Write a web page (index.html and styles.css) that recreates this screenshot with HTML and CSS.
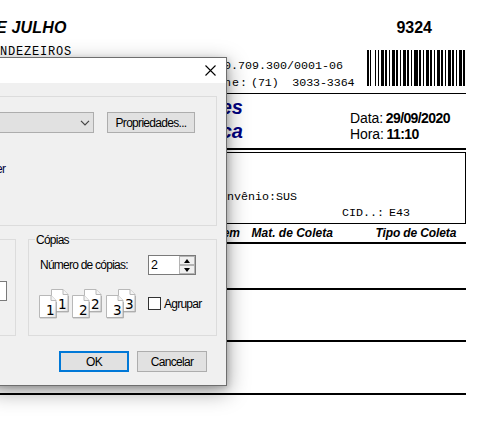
FILE: index.html
```
<!DOCTYPE html>
<html lang="pt-BR">
<head>
<meta charset="utf-8">
<title>Imprimir</title>
<link rel="stylesheet" href="styles.css">
</head>
<body>
<main class="sheet">
  <header class="letterhead">
    <div class="title-row"><span class="unit">E JULHO</span><span class="number">9324</span></div>
    <div class="street">NDEZEIROS</div>
    <div class="contact">
      <div class="contact-lines">
        <div class="cnpj">0.709.300/0001-06</div>
        <div class="phone"><span class="phone-label">ne:</span><span class="phone-number">(71)&nbsp; 3033-3364</span></div>
      </div>
      <svg class="barcode" width="98" height="36" viewBox="0 0 98 36" shape-rendering="crispEdges"><path d="M0 0h2v36h-2zM3 0h1v36h-1zM8 0h1v36h-1zM11 0h1v36h-1zM14 0h3v36h-3zM18 0h2v36h-2zM22 0h1v36h-1zM25 0h3v36h-3zM29 0h2v36h-2zM33 0h1v36h-1zM36 0h3v36h-3zM40 0h2v36h-2zM44 0h1v36h-1zM47 0h4v36h-4zM52 0h2v36h-2zM56 0h1v36h-1zM59 0h3v36h-3zM63 0h2v36h-2zM67 0h1v36h-1zM70 0h3v36h-3zM74 0h2v36h-2zM78 0h1v36h-1zM81 0h3v36h-3zM85 0h2v36h-2zM89 0h1v36h-1zM92 0h3v36h-3zM96 0h2v36h-2z"/></svg>
    </div>
  </header>
  <section class="heading">
    <div class="heading-title"><div>es</div><div>ca</div></div>
    <div class="stamp">
      <div>Data: <b>29/09/2020</b></div>
      <div>Hora: <b>11:10</b></div>
    </div>
  </section>
  <section class="patient">
    <div class="insurance">Convênio:SUS</div>
    <div class="cid"><span>CID..:</span><span>E43</span></div>
  </section>
  <div class="columns"><span class="col-order">em</span><span class="col-material">Mat. de Coleta</span><span class="col-type">Tipo de Coleta</span></div>
  <div class="entry"></div>
  <div class="entry"></div>
  <div class="entry"></div>
</main>

<div class="dialog" role="dialog">
  <div class="titlebar">
    <svg width="11" height="11" viewBox="0 0 11 11"><path d="M.5.5l10 10M10.5.5l-10 10" stroke="#000" stroke-width="1.1"/></svg>
  </div>
  <div class="dialog-body">
    <fieldset class="group printer">
      <div class="printer-row">
        <div class="combo"><svg width="10" height="6" viewBox="0 0 10 6"><path d="M1 .8l4 4 4-4" fill="none" stroke="#444" stroke-width="1.2"/></svg></div>
        <button class="btn props"><span>Propriedades...</span></button>
      </div>
      <div class="where">er</div>
    </fieldset>
    <div class="lower">
      <div class="group range"><div class="page-field"></div></div>
      <div class="group copies">
        <div class="legend">Cópias</div>
        <div class="count-row">
          <span class="count-label">Número de cópias:</span>
          <div class="spinner"><span class="value">2</span>
            <div class="arrows">
              <i><svg width="6" height="4" viewBox="0 0 6 4"><path d="M3 0l3 4H0z"/></svg></i>
              <i><svg width="6" height="4" viewBox="0 0 6 4"><path d="M0 0h6L3 4z"/></svg></i>
            </div>
          </div>
        </div>
        <div class="collate-row">
          <svg class="pages" width="100" height="32" viewBox="0 0 100 32">
            <defs>
              <linearGradient id="paper" x1="0" y1="0" x2="1" y2="1"><stop offset="0" stop-color="#fff"/><stop offset=".6" stop-color="#fff"/><stop offset="1" stop-color="#e4e4e4"/></linearGradient>
              <g id="leaf"><path d="M.5.5h11.500l5 5v17H.5z" fill="url(#paper)" stroke="#b8b8b8"/><path d="M12 .5v5h5" fill="#f4f4f4" stroke="#b8b8b8"/><path d="M1 23h16.500V7" fill="none" stroke="#999" stroke-width=".6"/></g>
            </defs>
            <g><use href="#leaf" x="12" y="1"/><use href="#leaf" x="0" y="7"/><text x="19" y="21">1</text><text x="7" y="27">1</text></g>
            <g transform="translate(33)"><use href="#leaf" x="12" y="1"/><use href="#leaf" x="0" y="7"/><text x="19" y="21">2</text><text x="7" y="27">2</text></g>
            <g transform="translate(67)"><use href="#leaf" x="12" y="1"/><use href="#leaf" x="0" y="7"/><text x="19" y="21">3</text><text x="7" y="27">3</text></g>
          </svg>
          <span class="check"></span><span class="check-label">Agrupar</span>
        </div>
      </div>
    </div>
    <div class="actions">
      <button class="btn ok"><span>OK</span></button>
      <button class="btn"><span>Cancelar</span></button>
    </div>
  </div>
</div>
</body>
</html>
```
FILE: styles.css
```
* { box-sizing: border-box; }
body { margin: 0; width: 491px; height: 435px; overflow: hidden; background: #fff; color: #000; font-family: "Liberation Sans", sans-serif; }

.sheet { width: 466px; }
.letterhead { height: 94px; border-bottom: 1px solid #000; font-family: "Liberation Mono", monospace; }
.title-row { display: flex; justify-content: space-between; height: 44px; padding: 18px 34px 0 0; font: bold 16px/20px "Liberation Sans", sans-serif; }
.unit { font-style: italic; margin-left: -4px; letter-spacing: .2px; }
.street { height: 6px; font-size: 12px; line-height: 16px; letter-spacing: .8px; }
.contact { display: flex; justify-content: flex-end; padding-right: 1px; }
.contact-lines { font-size: 11.67px; width: 141px; padding-top: 9px; margin-right: 2px; white-space: nowrap; }
.cnpj { height: 17px; line-height: 14px; }
.phone { display: flex; line-height: 14px; }
.phone-label { width: 27px; letter-spacing: 1px; }
.phone-number { letter-spacing: -.1px; }
.barcode { display: block; }

.heading { display: flex; justify-content: space-between; height: 56px; border-bottom: 2px solid #000; }
.heading-title { width: 243px; padding-top: 1px; text-align: right; font: italic bold 20px/24px "Liberation Sans", sans-serif; color: #000080; }
.stamp { width: 116px; padding-top: 16px; font-size: 14px; line-height: 16px; letter-spacing: -.1px; white-space: nowrap; }
.stamp b { margin-left: -1px; letter-spacing: -.6px; }

.patient { height: 72px; margin-top: 2px; border: 1px solid #000; padding: 36px 0 0 212px; font: 11.67px/16px "Liberation Mono", monospace; }
.cid { display: flex; gap: 5px; padding-left: 129px; }
.columns { display: flex; height: 20px; border-bottom: 2px solid #000; font: italic bold 12px/18px "Liberation Sans", sans-serif; letter-spacing: 0; }
.col-order { width: 240px; text-align: right; }
.col-material { width: 124px; margin-left: 11.500px; }
.col-type { letter-spacing: -.12px; }
.entry { height: 52px; border-bottom: 2px solid #000; }
.columns + .entry { height: 46px; }
.entry:last-child { height: 53px; }

.dialog { position: absolute; left: -10px; top: 57px; width: 237px; height: 329px; border: 1px solid #6e6e6e; background: #f0f0f0; box-shadow: 1px 6px 20px rgba(0,0,0,.38), 1px 2px 6px rgba(0,0,0,.18); font-size: 12px; letter-spacing: -.76px; }
.titlebar { display: flex; justify-content: flex-end; align-items: center; height: 25px; padding-right: 10px; background: #fff; }
.dialog-body { padding: 13px 9px 0 0; }
.group { margin: 0; border: 1px solid #dcdcdc; }
.printer { height: 130px; padding: 15px 0 0; }
.printer-row { display: flex; gap: 13px; }
.combo { display: flex; align-items: center; justify-content: flex-end; width: 102px; height: 21px; padding-right: 3px; border: 1px solid #adadad; background: #e1e1e1; }
.btn { display: flex; align-items: center; justify-content: center; width: 70px; height: 21px; padding: 0; border: 1px solid #adadad; background: #e1e1e1; color: #000; font: 12px "Liberation Sans", sans-serif; letter-spacing: -.7px; }
.props { width: 88px; }
.where { padding: 29px 0 0 4px; line-height: 14px; color: #000040; }
.lower { display: flex; gap: 12px; margin-top: 13px; }
.range { width: 25px; height: 97px; padding-top: 41px; }
.page-field { width: 15px; height: 20px; border: 1px solid #7a7a7a; background: #fff; }
.copies { width: 189px; height: 97px; }
.legend { width: max-content; height: 14px; margin: -7px 0 0 6px; padding: 0 2px 0 1px; background: #f0f0f0; line-height: 14px; }
.count-row { display: flex; align-items: center; margin-top: 8px; padding-left: 11px; }
.count-label { width: 108px; }
.spinner { display: flex; width: 48px; height: 20px; border: 1px solid #7a7a7a; background: #fff; }
.value { flex: 1; padding-left: 2px; line-height: 18px; font-size: 12.500px; }
.arrows { display: flex; flex-direction: column; width: 16px; }
.arrows i { display: flex; flex: 1; align-items: center; justify-content: center; border: 1px solid #b4b4b4; background: #f0f0f0; }
.collate-row { display: flex; align-items: center; margin-top: 13px; padding-left: 10px; }
.pages { font: 13.5px "DejaVu Sans", sans-serif; letter-spacing: 0; }
.check { width: 13px; height: 13px; margin: -2px 3px 0 9px; border: 1px solid #333; background: #fff; }
.check-label { margin-top: -1px; }
.actions { display: flex; justify-content: flex-end; gap: 8px; margin-top: 15px; padding-right: 10px; }
.ok { border: 2px solid #0078d7; }
```
